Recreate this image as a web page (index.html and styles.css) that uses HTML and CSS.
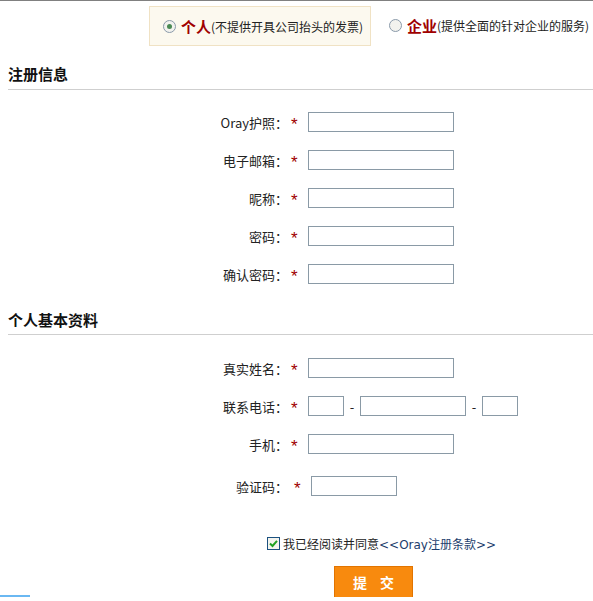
FILE: index.html
```html
<!DOCTYPE html>
<html>
<head>
    <title>Oray 注册</title>
    <link rel="stylesheet" href="styles.css">
</head>
<body>
    <div class="choose">
        <div class="choose-item active">
            <span class="radio checked"></span>
            <b>个人</b><span class="note">(不提供开具公司抬头的发票)</span>
        </div>
        <div class="choose-item">
            <span class="radio"></span>
            <b>企业</b><span class="note">(提供全面的针对企业的服务)</span>
        </div>
    </div>

    <h3 class="section-title">注册信息</h3>
    <div class="rows first">
        <div class="row"><label>Oray护照：</label><span class="star">*</span><input type="text" class="txt"></div>
        <div class="row"><label>电子邮箱：</label><span class="star">*</span><input type="text" class="txt"></div>
        <div class="row"><label>昵称：</label><span class="star">*</span><input type="text" class="txt"></div>
        <div class="row"><label>密码：</label><span class="star">*</span><input type="password" class="txt"></div>
        <div class="row"><label>确认密码：</label><span class="star">*</span><input type="password" class="txt"></div>
    </div>

    <h3 class="section-title second">个人基本资料</h3>
    <div class="rows second">
        <div class="row"><label>真实姓名：</label><span class="star">*</span><input type="text" class="txt"></div>
        <div class="row">
            <label>联系电话：</label><span class="star">*</span>
            <input type="text" class="txt short">
            <span class="dash">-</span>
            <input type="text" class="txt mid">
            <span class="dash">-</span>
            <input type="text" class="txt short">
        </div>
        <div class="row"><label>手机：</label><span class="star">*</span><input type="text" class="txt"></div>
        <div class="row code"><label>验证码：</label><span class="star">*</span><input type="text" class="txt code-input"></div>
    </div>

    <div class="agree">
        <svg class="check" width="13" height="13" viewBox="0 0 13 13">
            <rect x="0.5" y="0.5" width="12" height="12" fill="#f4f4ee" stroke="#1c5180"/>
            <path d="M3 6.5 L5.5 9 L10 3.8" fill="none" stroke="#21a121" stroke-width="2"/>
        </svg>
        <span>我已经阅读并同意</span><a href="#" class="terms">&lt;&lt;Oray注册条款&gt;&gt;</a>
    </div>
    <div class="submit-wrap">
        <button class="submit">提 交</button>
    </div>
    <div class="edge"></div>
</body>
</html>
```

FILE: styles.css
```css
body {
    margin: 0;
    padding: 0;
    font-family: "Noto Sans CJK SC", sans-serif;
    font-size: 13px;
    color: #222;
    background: #fff;
    border-top: 1px solid #808080;
}
.choose {
    display: flex;
    align-items: center;
    padding-left: 149px;
    height: 48px;
    white-space: nowrap;
}
.choose-item {
    display: flex;
    align-items: center;
    height: 40px;
    font-size: 12px;
}
.choose-item.active {
    width: 222px;
    margin-top: 2px;
    background-color: #fcf9ef;
    border: 1px solid #f0e2c4;
    padding-left: 13px;
    box-sizing: border-box;
    margin-right: 18px;
}
.choose-item b {
    font-size: 15px;
    color: #a00000;
    margin-left: 5px;
}
.note {
    color: #222;
}
.radio {
    display: inline-block;
    width: 11px;
    height: 11px;
    border: 1px solid #8a9aaa;
    border-radius: 50%;
    background: #f2f2ee;
    position: relative;
}
.radio.checked::after {
    content: "";
    position: absolute;
    left: 3px;
    top: 3px;
    width: 5px;
    height: 5px;
    border-radius: 50%;
    background: #4a8a54;
}
.section-title {
    margin: 15px 0 0 8px;
    font-size: 15px;
    line-height: 20px;
    font-weight: bold;
    color: #111;
    padding-bottom: 5px;
    border-bottom: 1px solid #cfcfcf;
}
.section-title.second {
    margin-top: 17px;
    padding-bottom: 4px;
}
.rows {
    padding-top: 13px;
}
.rows.second {
    padding-top: 14px;
}
.row {
    display: flex;
    align-items: center;
    height: 38px;
}
.row label {
    width: 288px;
    text-align: right;
}
.star {
    width: 20px;
    padding-left: 3px;
    box-sizing: border-box;
    color: #a00000;
    font-family: "Liberation Sans", sans-serif;
    font-size: 17px;
    line-height: 17px;
    padding-top: 4px;
}
.txt {
    width: 146px;
    height: 20px;
    box-sizing: border-box;
    border: 1px solid #8a9aa6;
    margin: 0;
    padding: 1px 3px;
}
.txt.short {
    width: 36px;
}
.txt.mid {
    width: 106px;
}
.dash {
    width: 16px;
    text-align: center;
}
.row.code {
    height: 42px;
    margin-top: 2px;
}
.row.code .star {
    padding-left: 6px;
    width: 23px;
}
.txt.code-input {
    width: 86px;
}
.agree {
    display: flex;
    align-items: center;
    padding-left: 267px;
    margin-top: 28px;
    font-size: 12px;
}
.check {
    margin-right: 3px;
}
.terms {
    color: #1c3d6c;
    text-decoration: none;
    font-family: "DejaVu Sans", "Noto Sans CJK SC", sans-serif;
}
.submit-wrap {
    padding-left: 334px;
    margin-top: 14px;
}
.submit {
    width: 79px;
    height: 32px;
    background-color: #f88a0e;
    border: 1px solid #e27400;
    color: #fff;
    font-family: "Noto Sans CJK SC", sans-serif;
    font-size: 14px;
    font-weight: bold;
    letter-spacing: 5px;
    text-indent: 5px;
    cursor: pointer;
}
.edge {
    width: 30px;
    height: 2px;
    margin-top: -3px;
    background: #6ab8f2;
}
```
